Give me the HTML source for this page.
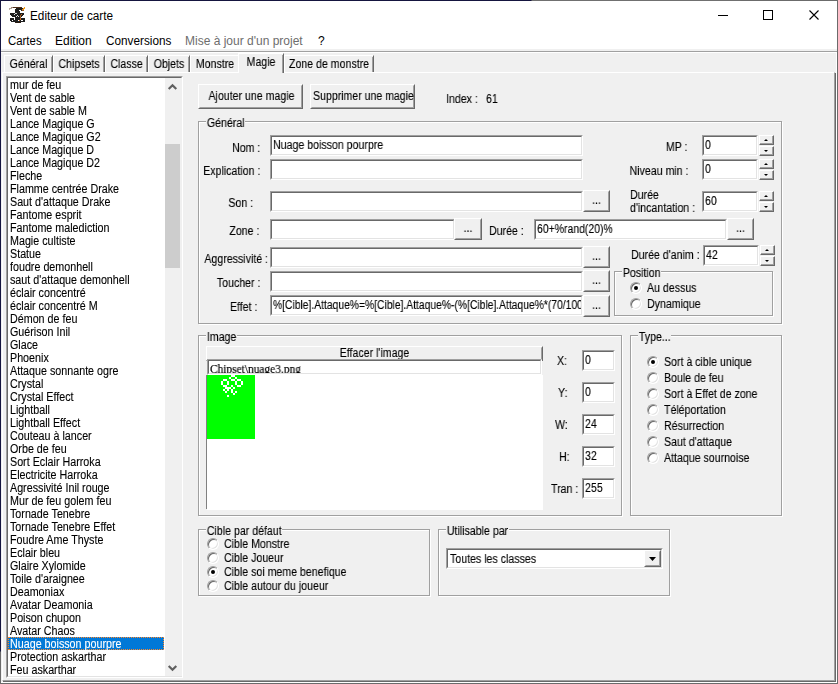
<!DOCTYPE html>
<html lang="fr"><head><meta charset="utf-8"><title>Editeur de carte</title>
<style>
html,body{margin:0;padding:0;}
body{width:838px;height:684px;overflow:hidden;background:#f0f0f0;position:relative;font-family:"Liberation Sans",sans-serif;font-size:12.5px;color:#000;}
body>div,body>svg,.abs{position:absolute;}
.t,.gl,.seg,.btn span,.tab span,.ed i,#lb span{white-space:nowrap;line-height:13px;transform:scaleX(0.848);transform-origin:0 0;display:block;}
.t.r{transform-origin:100% 0;}
.t,.gl,.btn span,.tab span,.ed i,#lb{will-change:transform;}
.t{margin-top:1px;}
.t,.gl,.btn span,.tab span,.ed i,#lb span{-webkit-text-stroke:0.12px currentColor;}
.seg{font-size:12px;line-height:16px;}
#tb{left:1px;top:1px;width:836px;height:30px;background:#fff;}
#mb{left:1px;top:31px;width:836px;height:18px;background:#fff;}
#mb:after{content:"";position:absolute;left:0;right:0;top:20px;height:1px;background:#a0a0a0;border-bottom:1px solid #fff;}
#pane{left:2px;top:72px;width:831px;height:607px;border-left:1px solid #fff;border-top:1px solid #fff;border-right:1px solid #a0a0a0;border-bottom:1px solid #a0a0a0;box-shadow:1px 1px 0 #696969;box-sizing:content-box;}
.tab{box-sizing:border-box;border-left:1px solid #fff;border-top:1px solid #fff;border-right:1px solid #696969;background:#f0f0f0;}
.tab:after{content:"";position:absolute;right:0;top:1px;bottom:0;width:1px;background:#a0a0a0;}
.tab span{position:absolute;left:-30px;right:-30px;top:2px;text-align:center;transform-origin:50% 0;}
.tab.sel span{top:2px;}
#lb{left:6px;top:76px;width:173px;height:598px;background:#fff;border:2px solid;border-color:#a0a0a0 #fff #fff #a0a0a0;box-sizing:content-box;}
#lb:before{content:"";position:absolute;left:-1px;top:-1px;right:-1px;bottom:-1px;border:1px solid;border-color:#696969 #e3e3e3 #e3e3e3 #696969;pointer-events:none;}
#lb div{height:13px;padding-left:1.5px;width:154px;position:static;box-sizing:border-box;width:156px;}
#lb span{position:relative;top:1px;transform:scaleX(.858);}
#lb div.sel{background:#0078d7;color:#fff;outline:1px dotted #ff8728;outline-offset:-1px;}
#sb{left:165px;top:78px;width:17px;height:598px;background:#f0f0f0;}
#th{position:absolute;left:0;top:66px;width:15px;height:124px;background:#cdcdcd;}
.btn{box-sizing:border-box;background:#f0f0f0;border:1px solid;border-color:#fff #696969 #696969 #fff;}
.btn:before{content:"";position:absolute;left:0;top:0;right:0;bottom:0;border:1px solid;border-color:#f0f0f0 #a0a0a0 #a0a0a0 #f0f0f0;}
.btn span{position:absolute;left:-60px;right:-60px;text-align:center;transform-origin:50% 0;}
.ed{box-sizing:border-box;background:#fff;border:1px solid;border-color:#a0a0a0 #fff #fff #a0a0a0;overflow:hidden;}
.ed:before{content:"";position:absolute;left:0;top:0;right:0;bottom:0;border:1px solid;border-color:#696969 #e3e3e3 #e3e3e3 #696969;}
.ed span{position:absolute;left:1px;top:1px;right:1px;bottom:1px;overflow:hidden;}
.ed i{position:absolute;left:1px;top:2px;font-style:normal;}
.ed i.ser{font-family:"Liberation Serif",serif;font-size:12px;left:0.5px;top:2px;line-height:13px;transform:scaleX(.95);-webkit-text-stroke:0.2px #000;}
.grp{box-sizing:border-box;border:1px solid #a0a0a0;box-shadow:1px 1px 0 #fff;}
.grp i{position:absolute;left:0;top:0;right:0;bottom:0;border-left:1px solid #fff;border-top:1px solid #fff;}
.gl{background:#f0f0f0;height:13px;padding:0 .5px 0 1px;}
.rd{width:12px;height:12px;box-sizing:border-box;border-radius:50%;background:#fff;border:1px solid;border-color:#a0a0a0 #fff #fff #a0a0a0;box-shadow:inset 1px 1px 0 #696969, inset -1px -1px 0 #e3e3e3;}
.rd b{position:absolute;left:3px;top:3px;width:4px;height:4px;border-radius:50%;background:#000;}
.sp{width:15px;}
.sp u,.sp s{position:absolute;left:0;width:15px;height:10px;box-sizing:border-box;background:#f0f0f0;border:1px solid;border-color:#fff #696969 #696969 #fff;box-shadow:inset -1px -1px 0 #a0a0a0;}
.sp u{top:0;} .sp s{bottom:0;}
.sp u:after{content:"";position:absolute;left:3.5px;top:3px;border:2px solid transparent;border-top:0;border-bottom:2px solid #000;}
.sp s:after{content:"";position:absolute;left:3.5px;top:3px;border:2px solid transparent;border-bottom:0;border-top:2px solid #000;}
</style></head>
<body>
<div id="tb"></div>
<svg id="ico" width="17" height="16" viewBox="0 0 17 16" style="left:9px;top:7px"><rect x="2" y="0" width="2" height="1" fill="#9a8478"/><rect x="4" y="0" width="9" height="1" fill="#4a2c1a"/><rect x="15" y="0" width="1" height="1" fill="#f5a01c"/><rect x="0" y="1" width="3" height="1" fill="#b4a49c"/><rect x="7" y="1" width="7" height="1" fill="#1e1e1e"/><rect x="14" y="1" width="2" height="1" fill="#f59a1c"/><rect x="0" y="2" width="1" height="1" fill="#c0b4ac"/><rect x="6" y="2" width="7" height="1" fill="#1e1e1e"/><rect x="13" y="2" width="2" height="1" fill="#e8901c"/><rect x="6" y="3" width="4" height="1" fill="#1e1e1e"/><rect x="12" y="3" width="1" height="1" fill="#2a2a2a"/><rect x="13" y="3" width="2" height="1" fill="#a05a1c"/><rect x="6" y="4" width="5" height="1" fill="#1e1e1e"/><rect x="6" y="5" width="5" height="1" fill="#262626"/><rect x="1" y="6" width="14" height="1" fill="#1e1e1e"/><rect x="6" y="6" width="2" height="1" fill="#d8d8d8"/><rect x="1" y="7" width="14" height="1" fill="#1e1e1e"/><rect x="5" y="7" width="1" height="1" fill="#e0e0e0"/><rect x="12" y="7" width="1" height="1" fill="#c86a1c"/><rect x="2" y="8" width="12" height="1" fill="#1e1e1e"/><rect x="8" y="8" width="1" height="1" fill="#e0e0e0"/><rect x="11" y="8" width="1" height="1" fill="#a05a1c"/><rect x="3" y="9" width="10" height="1" fill="#1e1e1e"/><rect x="7" y="9" width="1" height="1" fill="#e0e0e0"/><rect x="9" y="9" width="1" height="1" fill="#e0e0e0"/><rect x="11" y="9" width="1" height="1" fill="#c86a1c"/><rect x="6" y="10" width="5" height="1" fill="#1e1e1e"/><rect x="11" y="10" width="1" height="1" fill="#6a4a3a"/><rect x="1" y="11" width="4" height="1" fill="#1e1e1e"/><rect x="6" y="11" width="5" height="1" fill="#1e1e1e"/><rect x="11" y="11" width="1" height="1" fill="#c86a1c"/><rect x="12" y="11" width="4" height="1" fill="#1e1e1e"/><rect x="1" y="12" width="4" height="1" fill="#1e1e1e"/><rect x="6" y="12" width="5" height="1" fill="#1e1e1e"/><rect x="11" y="12" width="1" height="1" fill="#c86a1c"/><rect x="12" y="12" width="4" height="1" fill="#1e1e1e"/><rect x="1" y="13" width="2" height="1" fill="#1e1e1e"/><rect x="4" y="13" width="2" height="1" fill="#1e1e1e"/><rect x="6" y="13" width="3" height="1" fill="#1e1e1e"/><rect x="10" y="13" width="1" height="1" fill="#c86a1c"/><rect x="11" y="13" width="1" height="1" fill="#1e1e1e"/><rect x="14" y="13" width="2" height="1" fill="#1e1e1e"/><rect x="2" y="14" width="4" height="1" fill="#1e1e1e"/><rect x="6" y="14" width="6" height="1" fill="#1e1e1e"/><rect x="12" y="14" width="4" height="1" fill="#1e1e1e"/><rect x="6" y="15" width="6" height="1" fill="#2a1c14"/></svg>
<div class="seg" style="left:30px;top:8px;color:#000;font-size:12px;transform:scaleX(0.98);">Editeur de carte</div>
<svg class="abs" width="140" height="30" style="left:698px;top:0px" viewBox="0 0 140 30">
<path d="M20 15.5 H30" stroke="#000" stroke-width="1" fill="none"/>
<rect x="65.5" y="10.5" width="9" height="9" stroke="#000" stroke-width="1" fill="none"/>
<path d="M111.5 10.5 L120.5 19.5 M120.5 10.5 L111.5 19.5" stroke="#000" stroke-width="1.1" fill="none"/>
</svg>
<div id="mb"></div>
<div class="seg" style="left:8px;top:33px;color:#000;font-size:12px;transform:scaleX(0.95);">Cartes</div>
<div class="seg" style="left:55px;top:33px;color:#000;font-size:12px;transform:scaleX(1);">Edition</div>
<div class="seg" style="left:106px;top:33px;color:#000;font-size:12px;transform:scaleX(0.98);">Conversions</div>
<div class="seg" style="left:185px;top:33px;color:#6d6d6d;font-size:12px;transform:scaleX(1);">Mise à jour d'un projet</div>
<div class="seg" style="left:318px;top:33px;color:#000;font-size:12px;transform:scaleX(1);">?</div>
<div id="pane"></div>
<div class="tab" style="left:4px;top:55px;width:49px;height:17px;"><span>Général</span></div>
<div class="tab" style="left:53px;top:55px;width:52px;height:17px;"><span>Chipsets</span></div>
<div class="tab" style="left:105px;top:55px;width:43px;height:17px;"><span>Classe</span></div>
<div class="tab" style="left:148px;top:55px;width:42px;height:17px;"><span>Objets</span></div>
<div class="tab" style="left:190px;top:55px;width:50px;height:17px;"><span>Monstre</span></div>
<div class="tab" style="left:284px;top:55px;width:90px;height:17px;"><span>Zone de monstre</span></div>
<div class="tab sel" style="left:238px;top:53px;width:46px;height:20px;"><span>Magie</span></div>
<div id="lb">
<div><span>mur de feu</span></div>
<div><span>Vent de sable</span></div>
<div><span>Vent de sable M</span></div>
<div><span>Lance Magique G</span></div>
<div><span>Lance Magique G2</span></div>
<div><span>Lance Magique D</span></div>
<div><span>Lance Magique D2</span></div>
<div><span>Fleche</span></div>
<div><span>Flamme centrée Drake</span></div>
<div><span>Saut d'attaque Drake</span></div>
<div><span>Fantome esprit</span></div>
<div><span>Fantome malediction</span></div>
<div><span>Magie cultiste</span></div>
<div><span>Statue</span></div>
<div><span>foudre demonhell</span></div>
<div><span>saut d'attaque demonhell</span></div>
<div><span>éclair concentré</span></div>
<div><span>éclair concentré M</span></div>
<div><span>Démon de feu</span></div>
<div><span>Guérison Inil</span></div>
<div><span>Glace</span></div>
<div><span>Phoenix</span></div>
<div><span>Attaque sonnante ogre</span></div>
<div><span>Crystal</span></div>
<div><span>Crystal Effect</span></div>
<div><span>Lightball</span></div>
<div><span>Lightball Effect</span></div>
<div><span>Couteau à lancer</span></div>
<div><span>Orbe de feu</span></div>
<div><span>Sort Eclair Harroka</span></div>
<div><span>Electricite Harroka</span></div>
<div><span>Agressivité Inil rouge</span></div>
<div><span>Mur de feu golem feu</span></div>
<div><span>Tornade Tenebre</span></div>
<div><span>Tornade Tenebre Effet</span></div>
<div><span>Foudre Ame Thyste</span></div>
<div><span>Eclair bleu</span></div>
<div><span>Glaire Xylomide</span></div>
<div><span>Toile d'araignee</span></div>
<div><span>Deamoniax</span></div>
<div><span>Avatar Deamonia</span></div>
<div><span>Poison chupon</span></div>
<div><span>Avatar Chaos</span></div>
<div class="sel"><span>Nuage boisson pourpre</span></div>
<div><span>Protection askarthar</span></div>
<div><span>Feu askarthar</span></div>
</div>
<div id="sb"><div id="th"></div>
<svg width="17" height="17" style="position:absolute;left:0;top:0" viewBox="0 0 17 17"><path d="M3.7 11 L7.5 7.2 L11.3 11" stroke="#606060" stroke-width="2.2" fill="none"/></svg>
<svg width="17" height="17" style="position:absolute;left:0;bottom:0" viewBox="0 0 17 17"><path d="M3.7 7 L7.5 10.8 L11.3 7" stroke="#606060" stroke-width="2.2" fill="none"/></svg>
</div>
<div class="btn" style="left:198px;top:84px;width:105px;height:25px;"><span style="top:5px;margin-left:2px">Ajouter une magie</span></div>
<div class="btn" style="left:310px;top:84px;width:105px;height:25px;"><span style="top:5px;margin-left:2px;transform:scaleX(0.843)">Supprimer une magie</span></div>
<div class="t" style="left:446px;top:92px;">Index :</div>
<div class="t" style="left:486px;top:92px;">61</div>
<div class="grp" style="left:198px;top:121px;width:584px;height:203px;"><i></i></div>
<div class="gl" style="left:206px;top:117px;">Général</div>
<div class="t r" style="right:577.5px;top:141px;">Nom :</div>
<div class="ed" style="left:270px;top:135px;width:313px;height:21px;"><span><i>Nuage boisson pourpre</i></span></div>
<div class="t r" style="right:577.5px;top:164px;">Explication :</div>
<div class="ed" style="left:270px;top:159px;width:313px;height:21px;"></div>
<div class="t r" style="right:585px;top:196px;">Son :</div>
<div class="ed" style="left:270px;top:191px;width:313px;height:21px;"></div>
<div class="btn" style="left:583px;top:190px;width:27px;height:22px;"><span style="top:3px;margin-left:0px">...</span></div>
<div class="t r" style="right:579px;top:224px;">Zone :</div>
<div class="ed" style="left:270px;top:219px;width:185px;height:21px;"></div>
<div class="btn" style="left:454px;top:218px;width:28px;height:22px;"><span style="top:3px;margin-left:0px">...</span></div>
<div class="t" style="left:489px;top:224px;">Durée :</div>
<div class="ed" style="left:534px;top:219px;width:193px;height:21px;"><span><i style="transform:scaleX(0.835)">60+%rand(20)%</i></span></div>
<div class="btn" style="left:727px;top:218px;width:27px;height:22px;"><span style="top:3px;margin-left:0px">...</span></div>
<div class="t r" style="right:570px;top:252px;">Aggressivité :</div>
<div class="ed" style="left:270px;top:247px;width:313px;height:21px;"></div>
<div class="btn" style="left:583px;top:246px;width:27px;height:22px;"><span style="top:3px;margin-left:0px">...</span></div>
<div class="t r" style="right:578px;top:276px;">Toucher :</div>
<div class="ed" style="left:270px;top:271px;width:313px;height:21px;"></div>
<div class="btn" style="left:583px;top:270px;width:27px;height:22px;"><span style="top:3px;margin-left:0px">...</span></div>
<div class="t r" style="right:580.5px;top:300px;">Effet :</div>
<div class="ed" style="left:270px;top:295px;width:313px;height:21px;"><span><i style="transform:scaleX(0.825)">%[Cible].Attaque%=%[Cible].Attaque%-(%[Cible].Attaque%*(70/100</i></span></div>
<div class="btn" style="left:583px;top:295px;width:27px;height:22px;"><span style="top:3px;margin-left:0px">...</span></div>
<div class="t r" style="right:151px;top:140px;">MP :</div>
<div class="ed" style="left:702px;top:135px;width:56px;height:21px;"><span><i>0</i></span></div>
<div class="sp" style="left:759px;top:135px;height:21px;"><u></u><s></s></div>
<div class="t r" style="right:150px;top:164px;">Niveau min :</div>
<div class="ed" style="left:702px;top:159px;width:56px;height:21px;"><span><i>0</i></span></div>
<div class="sp" style="left:759px;top:159px;height:21px;"><u></u><s></s></div>
<div class="t" style="left:630px;top:188px;">Durée<br>d'incantation :</div>
<div class="ed" style="left:702px;top:191px;width:56px;height:21px;"><span><i>60</i></span></div>
<div class="sp" style="left:759px;top:191px;height:21px;"><u></u><s></s></div>
<div class="t" style="left:631px;top:248px;">Durée d'anim :</div>
<div class="ed" style="left:703px;top:245px;width:56px;height:21px;"><span><i>42</i></span></div>
<div class="sp" style="left:760px;top:245px;height:21px;"><u></u><s></s></div>
<div class="grp" style="left:614px;top:271px;width:159px;height:45px;"><i></i></div>
<div class="gl" style="left:622px;top:267px;">Position</div>
<div class="rd" style="left:630px;top:282px;"><b></b></div>
<div class="t" style="left:647px;top:281px;">Au dessus</div>
<div class="rd" style="left:630px;top:298px;"></div>
<div class="t" style="left:647px;top:297px;">Dynamique</div>
<div class="grp" style="left:198px;top:335px;width:424px;height:181px;"><i></i></div>
<div class="gl" style="left:206px;top:331px;">Image</div>
<div class="btn" style="left:206px;top:346px;width:337px;height:15px;"><span style="top:0px;margin-left:0px">Effacer l'image</span></div>
<div class="ed" style="left:207px;top:359px;width:335px;height:16px;"><span><i class="ser">Chipset\nuage3.png</i></span></div>
<div class="abs" style="left:206px;top:375px;width:1px;height:134px;background:#808080;"></div>
<div class="abs" style="left:207px;top:375px;width:336px;height:135px;background:#fff;"></div>
<svg class="abs" width="48" height="64" style="left:207px;top:375px" viewBox="0 0 24 32" shape-rendering="crispEdges">
<rect width="24" height="32" fill="#00ff00"/>
<g fill="#fff">
<rect x="12" y="0" width="2" height="1"/>
<rect x="11" y="1" width="1" height="1"/><rect x="14" y="1" width="1" height="1"/>
<rect x="8" y="2" width="2" height="1"/><rect x="12" y="2" width="2" height="1"/><rect x="15" y="2" width="2" height="1"/>
<rect x="7" y="3" width="1" height="2"/><rect x="10" y="3" width="1" height="2"/><rect x="14" y="3" width="1" height="2"/><rect x="17" y="3" width="1" height="2"/>
<rect x="8" y="5" width="2" height="1"/><rect x="12" y="5" width="1" height="1"/><rect x="15" y="5" width="2" height="1"/>
<rect x="9" y="6" width="2" height="1"/><rect x="11" y="6" width="1" height="1"/><rect x="13" y="6" width="1" height="1"/>
<rect x="8" y="7" width="1" height="1"/><rect x="10" y="7" width="1" height="1"/><rect x="12" y="7" width="1" height="1"/>
<rect x="9" y="8" width="1" height="1"/><rect x="12" y="8" width="1" height="1"/><rect x="14" y="8" width="1" height="1"/>
<rect x="13" y="9" width="1" height="1"/>
<rect x="10" y="10" width="1" height="1"/>
</g></svg>
<div class="t" style="left:557px;top:354px;">X:</div>
<div class="ed" style="left:582px;top:350px;width:33px;height:21px;"><span><i>0</i></span></div>
<div class="t" style="left:557.5px;top:386px;">Y:</div>
<div class="ed" style="left:582px;top:382px;width:33px;height:21px;"><span><i>0</i></span></div>
<div class="t" style="left:555px;top:418px;">W:</div>
<div class="ed" style="left:582px;top:414px;width:33px;height:21px;"><span><i>24</i></span></div>
<div class="t" style="left:558.5px;top:450px;">H:</div>
<div class="ed" style="left:582px;top:446px;width:33px;height:21px;"><span><i>32</i></span></div>
<div class="t" style="left:551px;top:482px;">Tran :</div>
<div class="ed" style="left:582px;top:478px;width:33px;height:21px;"><span><i>255</i></span></div>
<div class="grp" style="left:630px;top:335px;width:152px;height:181px;"><i></i></div>
<div class="gl" style="left:638px;top:331px;">Type...</div>
<div class="rd" style="left:647px;top:356px;"><b></b></div>
<div class="t" style="left:664px;top:355px;">Sort à cible unique</div>
<div class="rd" style="left:647px;top:372px;"></div>
<div class="t" style="left:664px;top:371px;">Boule de feu</div>
<div class="rd" style="left:647px;top:388px;"></div>
<div class="t" style="left:664px;top:387px;">Sort à Effet de zone</div>
<div class="rd" style="left:647px;top:404px;"></div>
<div class="t" style="left:664px;top:403px;">Téléportation</div>
<div class="rd" style="left:647px;top:420px;"></div>
<div class="t" style="left:664px;top:419px;">Résurrection</div>
<div class="rd" style="left:647px;top:436px;"></div>
<div class="t" style="left:664px;top:435px;">Saut d'attaque</div>
<div class="rd" style="left:647px;top:452px;"></div>
<div class="t" style="left:664px;top:451px;">Attaque sournoise</div>
<div class="grp" style="left:198px;top:529px;width:232px;height:67px;"><i></i></div>
<div class="gl" style="left:206px;top:525px;">Cible par défaut</div>
<div class="rd" style="left:207px;top:538px;"></div>
<div class="t" style="left:224px;top:537px;">Cible Monstre</div>
<div class="rd" style="left:207px;top:552px;"></div>
<div class="t" style="left:224px;top:551px;">Cible Joueur</div>
<div class="rd" style="left:207px;top:566px;"><b></b></div>
<div class="t" style="left:224px;top:565px;">Cible soi meme benefique</div>
<div class="rd" style="left:207px;top:580px;"></div>
<div class="t" style="left:224px;top:579px;">Cible autour du joueur</div>
<div class="grp" style="left:438px;top:529px;width:232px;height:67px;"><i></i></div>
<div class="gl" style="left:446px;top:525px;">Utilisable par</div>
<div class="ed" style="left:446px;top:548px;width:217px;height:21px;"><span><i style="left:2px;top:3px">Toutes les classes</i></span></div>
<div class="btn" style="left:644px;top:550px;width:17px;height:17px;"><svg width="7" height="4" viewBox="0 0 7 4" style="position:absolute;left:4px;top:6px"><path d="M0 0 H7 L3.5 4 Z" fill="#000"/></svg></div>
<div class="abs" style="left:0;top:0;width:838px;height:1px;background:linear-gradient(90deg,#15153f 0,#15153f 531px,#707070 532px,#707070 740px,#6b6b6b 741px)"></div>
<div class="abs" style="left:0;top:0;width:1px;height:684px;background:linear-gradient(180deg,#15153f 0,#15153f 651px,#6b6b6b 652px)"></div>
<div class="abs" style="left:837px;top:0;width:1px;height:684px;background:#6b6b6b"></div>
<div class="abs" style="left:0;top:683px;width:838px;height:1px;background:#6b6b6b"></div>
<div class="abs" style="left:836px;top:52px;width:1px;height:631px;background:#fff"></div>
<div class="abs" style="left:1px;top:682px;width:836px;height:1px;background:#fff"></div>
</body></html>
